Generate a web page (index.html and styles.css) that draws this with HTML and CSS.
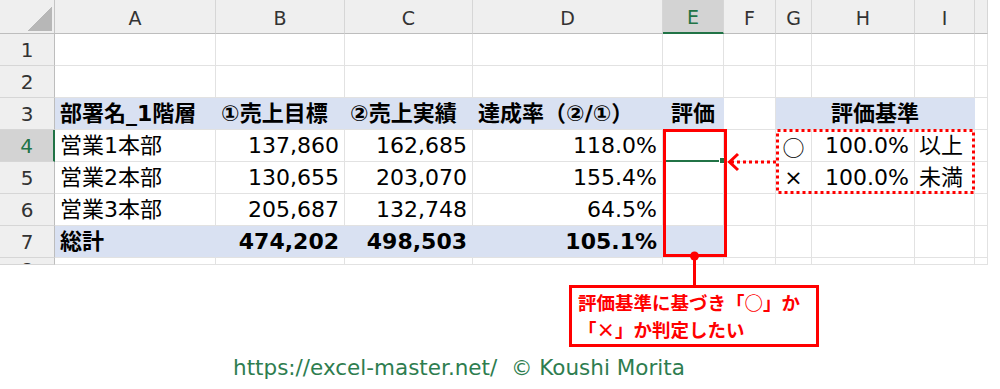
FILE: index.html
```html
<!DOCTYPE html>
<html lang="ja">
<head>
<meta charset="utf-8">
<title>評価</title>
<link rel="stylesheet" href="styles.css">
</head>
<body>
<div class="page">
  <div class="sheet">
    <div class="corner"></div>
    <div class="ch">A</div><div class="ch">B</div><div class="ch">C</div><div class="ch">D</div><div class="ch sel">E</div><div class="ch">F</div><div class="ch">G</div><div class="ch">H</div><div class="ch">I</div><div class="ch"></div>

    <div class="rh">1</div><div></div><div></div><div></div><div></div><div></div><div></div><div></div><div></div><div></div><div></div>
    <div class="rh">2</div><div></div><div></div><div></div><div></div><div></div><div></div><div></div><div></div><div></div><div></div>

    <div class="rh">3</div>
    <div class="fill b">部署名_1階層</div>
    <div class="fill b">①売上目標</div>
    <div class="fill b">②売上実績</div>
    <div class="fill b">達成率（②/①）</div>
    <div class="fill b c">評価</div>
    <div></div>
    <div class="fill b c span3">評価基準</div>
    <div></div>

    <div class="rh sel">4</div>
    <div>営業1本部</div><div class="r">137,860</div><div class="r">162,685</div><div class="r">118.0%</div>
    <div class="e4"></div><div></div>
    <div class="c sym">○</div><div class="r">100.0%</div><div class="l">以上</div><div></div>

    <div class="rh">5</div>
    <div>営業2本部</div><div class="r">130,655</div><div class="r">203,070</div><div class="r">155.4%</div>
    <div></div><div></div>
    <div class="c">×</div><div class="r">100.0%</div><div class="l">未満</div><div></div>

    <div class="rh">6</div>
    <div>営業3本部</div><div class="r">205,687</div><div class="r">132,748</div><div class="r">64.5%</div>
    <div></div><div></div><div></div><div></div><div></div><div></div>

    <div class="rh">7</div>
    <div class="fill b">総計</div><div class="fill b r">474,202</div><div class="fill b r">498,503</div><div class="fill b r">105.1%</div>
    <div class="fill"></div><div></div><div></div><div></div><div></div><div></div>

    <div class="rh top">8</div><div></div><div></div><div></div><div></div><div></div><div></div><div></div><div></div><div></div><div></div>
  </div>

  <svg class="overlay" width="1000" height="389" viewBox="0 0 1000 389">
    <rect x="664.5" y="130.5" width="61" height="125" fill="none" stroke="#ff0000" stroke-width="3"/>
    <line x1="694.5" y1="256" x2="694.5" y2="287" stroke="#ff0000" stroke-width="3"/>
    <circle cx="694.5" cy="256" r="4.5" fill="#ff0000"/>
    <rect x="777.5" y="130.5" width="196" height="62" fill="none" stroke="#ff0000" stroke-width="3" stroke-dasharray="3 3"/>
    <line x1="731" y1="162" x2="776" y2="162" stroke="#ff0000" stroke-width="3" stroke-dasharray="3 3"/>
    <polyline points="738,154 729.5,162 738,170" fill="none" stroke="#ff0000" stroke-width="3"/>
  </svg>

  <div class="callout">
    <p>評価基準に基づき「○」か</p>
    <p>「×」か判定したい</p>
  </div>

  <div class="footer">https://excel-master.net/&nbsp;&nbsp;© Koushi Morita</div>
</div>
</body>
</html>
```

FILE: styles.css
```css
html, body {
  margin: 0;
  padding: 0;
  background: #ffffff;
}

body {
  font-family: "DejaVu Sans", "Noto Sans CJK JP", sans-serif;
}

.page {
  position: relative;
  width: 1000px;
  height: 389px;
  overflow: hidden;
}

.sheet {
  display: grid;
  grid-template-columns: 55px 161px 129px 128px 190px 61px 52px 36px 103px 60px 13px;
  grid-template-rows: 34px repeat(7, 32px) 7px;
  width: 988px;
  font-size: 22px;
  color: #000000;
}

.sheet > div {
  box-sizing: border-box;
  border-right: 1px solid #e2e2e2;
  border-bottom: 1px solid #e2e2e2;
  display: flex;
  align-items: center;
  padding: 0 5px;
  white-space: nowrap;
  overflow: hidden;
  line-height: 1;
}

.sheet > .corner {
  background-color: #efefef;
  background-image: linear-gradient(to bottom right, transparent 50%, #b7b7b7 50%);
  background-size: 25px 24px;
  background-position: right 2px bottom 2px;
  background-repeat: no-repeat;
  border-right-color: #c4c4c4;
  border-bottom-color: #bdbdbd;
}

.sheet > .ch {
  background: #efefef;
  justify-content: center;
  align-items: flex-end;
  padding-bottom: 5px;
  font-size: 19px;
  color: #333333;
  border-right-color: #d6d6d6;
  border-bottom-color: #bdbdbd;
}

.sheet > .ch.sel {
  background: #d3d3d3;
  color: #217346;
  border-bottom: 2px solid #217346;
}

.sheet > .rh {
  background: #efefef;
  justify-content: center;
  font-size: 20px;
  color: #333333;
  border-right-color: #bdbdbd;
  border-bottom-color: #d6d6d6;
}

.sheet > .rh.sel {
  background: #d3d3d3;
  color: #217346;
  border-right: 2px solid #217346;
}

.sheet > .rh.top {
  align-items: flex-start;
  padding-top: 2px;
}

.sheet > .fill {
  background: #d9e1f2;
  border-right-color: #d9e1f2;
}

.b {
  font-weight: bold;
}

.sheet > .r {
  justify-content: flex-end;
}

.sheet > .c {
  justify-content: center;
}

.sheet > .sym {
  font-family: "Noto Sans CJK JP", sans-serif;
  padding: 0;
}

.sheet > .l {
  padding-left: 4px;
}

.span3 {
  grid-column: span 3;
}

.sheet > .e4 {
  position: relative;
  overflow: visible;
  border-bottom: 2px solid #217346;
}

.e4::after {
  content: "";
  position: absolute;
  right: -3px;
  bottom: -4px;
  width: 5px;
  height: 5px;
  background: #217346;
  border: 1px solid #ffffff;
}

.overlay {
  position: absolute;
  left: 0;
  top: 0;
  pointer-events: none;
}

.callout {
  position: absolute;
  left: 569px;
  top: 285px;
  width: 250px;
  height: 62px;
  box-sizing: border-box;
  border: 3px solid #ff0000;
  background: #ffffff;
  padding: 1px 0 0 6px;
  font-family: "Noto Sans CJK JP", sans-serif;
  font-weight: bold;
  font-size: 18.5px;
  line-height: 27px;
  color: #ff0000;
}

.callout p {
  margin: 0;
  white-space: nowrap;
}

.footer {
  margin-top: 88px;
  padding-left: 233px;
  font-size: 21.5px;
  line-height: 30px;
  color: #2e7d4f;
  white-space: nowrap;
}
```
